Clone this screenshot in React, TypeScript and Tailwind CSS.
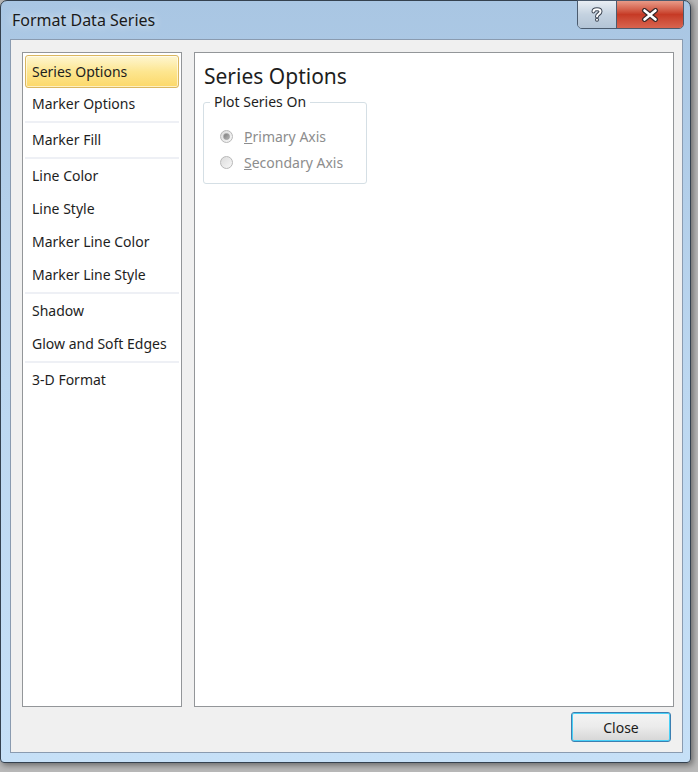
import React from "react";

const groups: string[][] = [
  ["Series Options", "Marker Options"],
  ["Marker Fill"],
  ["Line Color", "Line Style", "Marker Line Color", "Marker Line Style"],
  ["Shadow", "Glow and Soft Edges"],
  ["3-D Format"],
];

const Radio = ({ checked }: { checked?: boolean }) => (
  <span className="w-[13px] h-[13px] rounded-full border border-[#b8b8b8] bg-gradient-to-br from-[#dcdcdc] to-[#f7f7f7] flex items-center justify-center shrink-0">
    {checked && (
      <span className="w-[7px] h-[7px] rounded-full bg-gradient-to-br from-[#7e7e7e] to-[#b4b4b4] border border-[#a0a0a0]" />
    )}
  </span>
);

const HelpButton = () => (
  <div className="w-[39px] h-[27px] bg-gradient-to-b from-[#e9eef4] via-[#c4d2e0] to-[#b3c4d6] border-r border-[#4b5b6e] flex items-center justify-center">
    <svg width="12" height="15" viewBox="0 0 12 15">
      <path
        d="M2.5 4.5 C2.5 1.5 9.5 1.5 9.5 4.5 C9.5 7 6 7 6 9.5"
        fill="none"
        stroke="#3d4654"
        strokeWidth="4"
        strokeLinecap="round"
      />
      <path
        d="M2.5 4.5 C2.5 1.5 9.5 1.5 9.5 4.5 C9.5 7 6 7 6 9.5"
        fill="none"
        stroke="#ffffff"
        strokeWidth="2"
        strokeLinecap="round"
      />
      <circle cx="6" cy="12.8" r="2" fill="#3d4654" />
      <circle cx="6" cy="12.8" r="1" fill="#ffffff" />
    </svg>
  </div>
);

const CloseGlyph = () => (
  <div className="w-[66px] h-[27px] bg-gradient-to-b from-[#e89a88] via-[#c63a25] to-[#d8644f] flex items-center justify-center">
    <svg width="18" height="14" viewBox="0 0 18 14">
      <path d="M3.5 2.5 L14.5 11.5 M14.5 2.5 L3.5 11.5" stroke="#3b2a2a" strokeWidth="5" strokeLinecap="round" />
      <path d="M3.5 2.5 L14.5 11.5 M14.5 2.5 L3.5 11.5" stroke="#ffffff" strokeWidth="2.6" strokeLinecap="round" />
    </svg>
  </div>
);

export default function App() {
  return (
    <div className="w-[698px] h-[772px] bg-[#b9b9b9] font-['Noto_Sans',sans-serif] overflow-hidden">
      <div className="w-[691px] h-[763px] rounded-t-[7px] rounded-b-[4px] border border-[#34414f] bg-gradient-to-b from-[#a9c6e3] via-[#bcd7f0] to-[#c6e0f7] flex flex-col shadow-[2px_2px_6px_rgba(0,0,0,0.45)]">
        <div className="h-[38px] flex items-start justify-between shrink-0">
          <div className="pl-[11px] pt-[7px] text-[16px] leading-[24px] text-[#1a1a1a] [text-shadow:0_0_8px_rgba(255,255,255,0.9)]">
            Format Data Series
          </div>
          <div className="-mt-px mr-[6px] flex border border-[#4b5b6e] rounded-b-[5px] overflow-hidden">
            <HelpButton />
            <CloseGlyph />
          </div>
        </div>
        <div className="ml-[9px] mr-[7px] h-[714px] border border-[#8a9bb0] bg-[#f0f0f0] shrink-0 flex flex-col pl-[11px] pr-[8px] pt-[12px]">
          <div className="flex gap-[12px] h-[655px]">
            <div className="w-[160px] h-full border border-[#939699] bg-white p-[2px] flex flex-col">
              {groups.map((g, gi) => (
                <React.Fragment key={gi}>
                  {gi > 0 && (
                    <div className="h-[3px] flex items-center">
                      <div className="w-full h-[2px] bg-[#eef0f5]" />
                    </div>
                  )}
                  {g.map((label) =>
                    label === "Series Options" ? (
                      <div
                        key={label}
                        className="h-[33px] -mb-px flex items-center pl-[6px] text-[14px] text-[#1e1e1e] rounded-[3px] border border-[#dbb75f] bg-gradient-to-b from-[#fef6d0] via-[#fde690] to-[#fcd868] shadow-[inset_0_0_0_1px_rgba(255,255,255,0.6)]"
                      >
                        {label}
                      </div>
                    ) : (
                      <div key={label} className="h-[33px] flex items-center pl-[7px] text-[14px] text-[#1e1e1e]">
                        {label}
                      </div>
                    )
                  )}
                </React.Fragment>
              ))}
            </div>
            <div className="flex-1 h-full border border-[#939699] bg-white pl-[9px] pt-[10px]">
              <div className="text-[21px] leading-[26px] text-[#1e1e1e]">Series Options</div>
              <fieldset className="mt-[3px] w-[164px] border border-[#d5dfe5] rounded-[3px] pt-[11px] pb-[8px] -ml-px">
                <legend className="ml-[6px] px-[4px] text-[14px] leading-[20px] text-[#1e1e1e]">Plot Series On</legend>
                <div className="pl-[16px]">
                  <div className="h-[26px] flex items-center gap-[11px] text-[14px] text-[#8d8d8d]">
                    <Radio checked />
                    <span>
                      <span className="underline">P</span>rimary Axis
                    </span>
                  </div>
                  <div className="h-[26px] flex items-center gap-[11px] text-[14px] text-[#8d8d8d]">
                    <Radio />
                    <span>
                      <span className="underline">S</span>econdary Axis
                    </span>
                  </div>
                </div>
              </fieldset>
            </div>
          </div>
          <div className="flex justify-end pr-[3px] pt-[5px]">
            <button className="w-[100px] h-[30px] rounded-[3px] border border-[#3c7fb1] bg-gradient-to-b from-[#f4f4f4] via-[#ebebeb] to-[#d6d6d6] shadow-[inset_0_0_0_1px_#48d0f7] text-[14px] text-[#1a1a1a]">
              Close
            </button>
          </div>
        </div>
      </div>
    </div>
  );
}
